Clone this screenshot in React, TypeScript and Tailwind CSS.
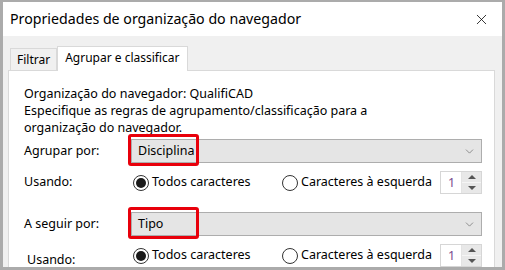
import { ChevronDown, X } from "lucide-react";

const font = { fontFamily: '"Segoe UI", "Noto Sans", "Liberation Sans", sans-serif' };

function Dropdown({ value }: { value: string }) {
  return (
    <div className="relative flex-1">
      <div className="flex h-[24px] items-center justify-between border border-[#adadad] bg-[#e5e5e5] pl-[6px] pr-[5px]">
        <span className="text-[12.5px] text-black">{value}</span>
        <ChevronDown size={13} strokeWidth={1.2} className="text-[#606060]" />
      </div>
      <div className="pointer-events-none absolute left-[-3px] top-[-5px] h-[32px] w-[71px] rounded-[3px] border-[3px] border-[#e8000b]" />
    </div>
  );
}

function Radio({ checked, label }: { checked?: boolean; label: string }) {
  return (
    <label className="flex items-center gap-[3px] text-[12.5px] text-black">
      <span className="flex h-[16px] w-[16px] items-center justify-center rounded-full border border-[#333] bg-white">
        {checked && <span className="h-[10px] w-[10px] rounded-full bg-[#1a1a1a]" />}
      </span>
      {label}
    </label>
  );
}

function Spinner() {
  return (
    <div className="flex h-[23px] w-[42px] border border-[#d6d6d6] bg-white">
      <span className="flex-1 pl-[7px] text-[12.5px] leading-[21px] text-[#7a4b8c]">1</span>
      <div className="flex w-[20px] flex-col border-l border-[#e3e3e3] bg-[#e8e8e8]">
        <div className="flex flex-1 items-center justify-center border-b border-[#f5f5f5]">
          <span className="h-0 w-0 border-x-[4px] border-b-[4px] border-x-transparent border-b-[#555]" />
        </div>
        <div className="flex flex-1 items-center justify-center">
          <span className="h-0 w-0 border-x-[4px] border-t-[4px] border-x-transparent border-t-[#555]" />
        </div>
      </div>
    </div>
  );
}

function UsingRow({ indent }: { indent?: boolean }) {
  return (
    <div className="flex items-center">
      <span className={"w-[109px] text-[12.5px] " + (indent ? "-mb-[5px] pl-[3px] pt-[5px]" : "")}>Usando:</span>
      <div className="w-[149px]">
        <Radio checked label="Todos caracteres" />
      </div>
      <div className="w-[158px]">
        <Radio label="Caracteres à esquerda" />
      </div>
      <Spinner />
    </div>
  );
}

export default function App() {
  return (
    <div className="h-[270px] w-[505px] overflow-hidden border-x-[3px] border-b-[3px] border-t-[2px] border-[#ababab] bg-[#f0f0f0]" style={font}>
      <div className="flex h-[34px] items-center justify-between bg-white pl-[7px] pr-[12px]">
        <span className="text-[14.2px] text-black">Propriedades de organização do navegador</span>
        <X size={17} strokeWidth={1.1} className="text-black" />
      </div>
      <div className="pl-[5px] pr-[7px] pt-[9px]">
        <div className="flex items-end">
          <div className="ml-[2px] border border-b-0 border-[#d9d9d9] bg-[#f0f0f0] px-[6px] text-[12px] leading-[21px]">Filtrar</div>
          <div className="relative top-[1px] h-[25px] border border-b-0 border-[#d9d9d9] bg-white px-[7px] text-[12px] leading-[22px]">Agrupar e classificar</div>
        </div>
        <div className="h-[300px] border border-[#d9d9d9] bg-white pl-[15px] pr-[12px] pt-[14px] text-[12.5px] text-black">
          <div className="leading-[17px]">
            <div>Organização do navegador: QualifiCAD</div>
            <div>Especifique as regras de agrupamento/classificação para a</div>
            <div>organização do navegador.</div>
          </div>
          <div className="mt-[3px] flex items-center">
            <span className="w-[107px]">Agrupar por:</span>
            <Dropdown value="Disciplina" />
          </div>
          <div className="mt-[8px]">
            <UsingRow />
          </div>
          <div className="mt-[18px] flex items-center">
            <span className="w-[107px]">A seguir por:</span>
            <Dropdown value="Tipo" />
          </div>
          <div className="mt-[8px]">
            <UsingRow indent />
          </div>
        </div>
      </div>
    </div>
  );
}
